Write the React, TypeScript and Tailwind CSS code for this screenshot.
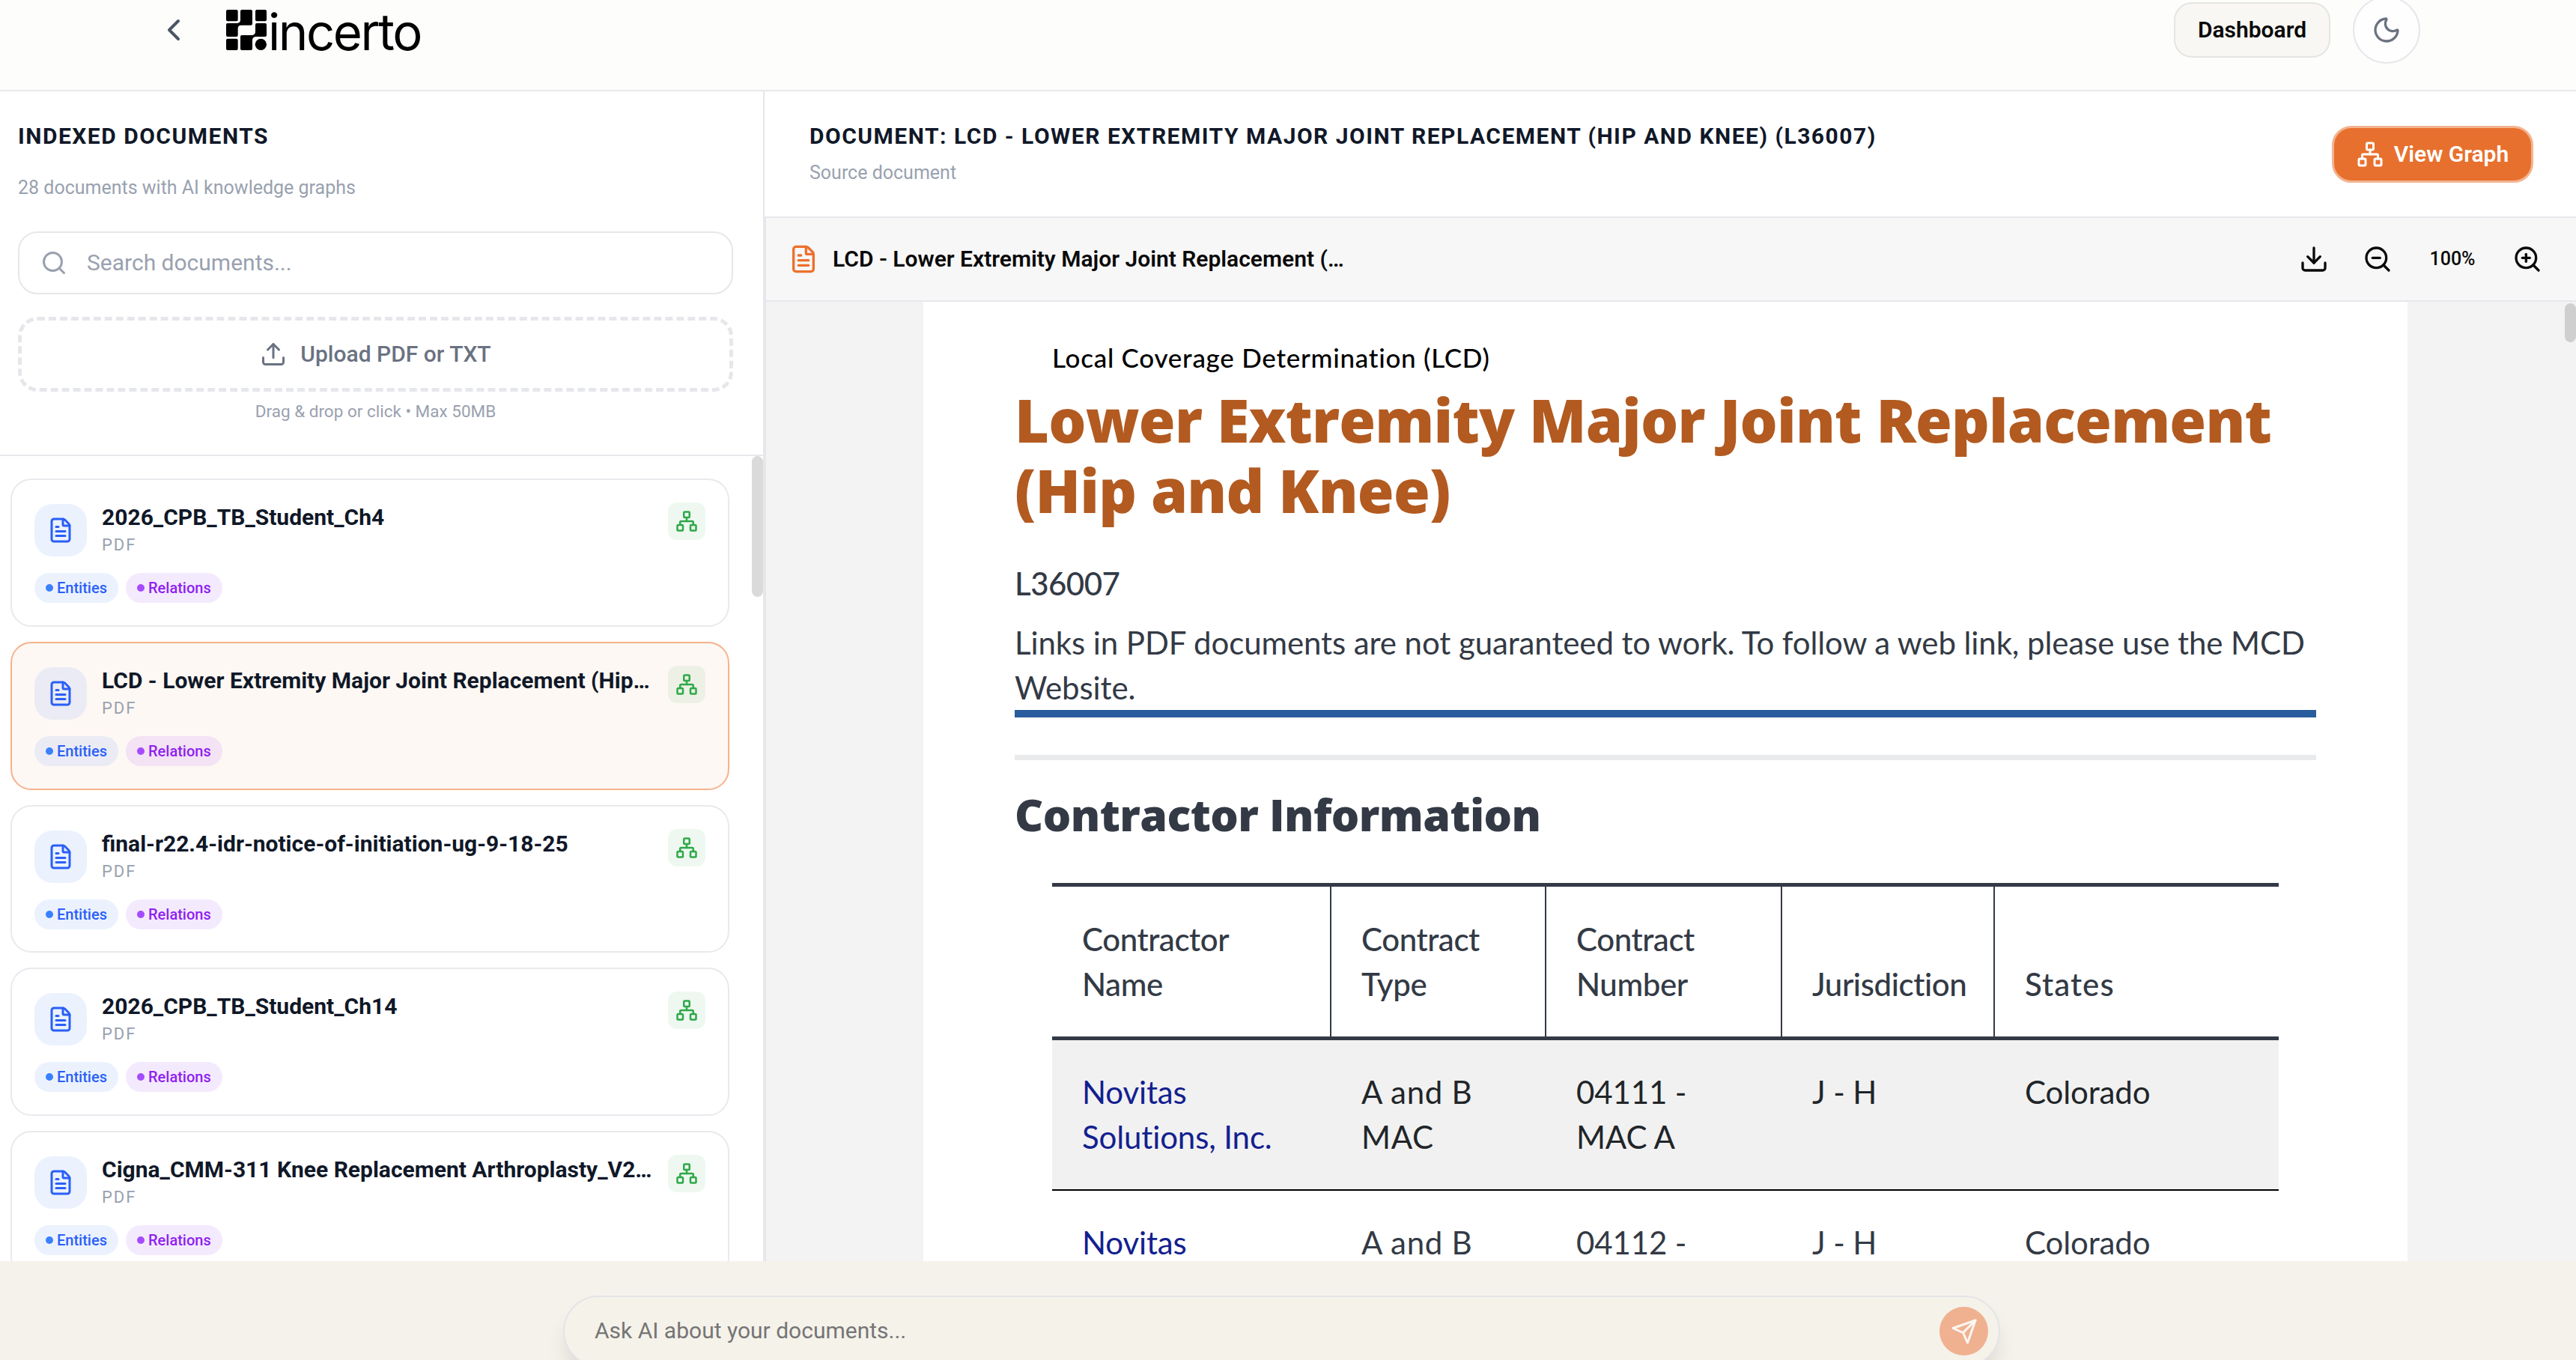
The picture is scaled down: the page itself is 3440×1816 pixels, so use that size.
import { ChevronLeft, Download, FileText, Moon, Network, Search, Upload, ZoomIn, ZoomOut } from "lucide-react";
import { clsx } from "clsx";

interface Doc {
  id: number;
  title: string;
  type: string;
  selected?: boolean;
}

const documents: Doc[] = [
  { id: 1, title: "2026_CPB_TB_Student_Ch4", type: "PDF" },
  { id: 2, title: "LCD - Lower Extremity Major Joint Replacement (Hip…", type: "PDF", selected: true },
  { id: 3, title: "final-r22.4-idr-notice-of-initiation-ug-9-18-25", type: "PDF" },
  { id: 4, title: "2026_CPB_TB_Student_Ch14", type: "PDF" },
  { id: 5, title: "Cigna_CMM-311 Knee Replacement Arthroplasty_V2…", type: "PDF" },
];

const tableHead = [
  ["Contractor", "Name"],
  ["Contract", "Type"],
  ["Contract", "Number"],
  ["Jurisdiction"],
  ["States"],
];

const tableRows = [
  [["Novitas", "Solutions, Inc."], ["A and B", "MAC"], ["04111 -", "MAC A"], ["J - H"], ["Colorado"]],
  [["Novitas"], ["A and B"], ["04112 -"], ["J - H"], ["Colorado"]],
];

function Logo() {
  return (
    <div className="flex items-center">
      <svg className="h-[54px] w-[54px]" viewBox="0 0 162 162" fill="#000">
        <rect width="47" height="46" rx="6" />
        <rect x="117" width="45" height="46" rx="6" />
        <rect y="116" width="47" height="46" rx="6" />
        <circle cx="139" cy="139" r="23" />
        <path d="M63 0H99q6 0 6 6V56q0 6-6 6H60q-12 0-13 12V102q0 6-6 6H6q-6 0-6-6V60q0-6 6-6H42q14 0 15-12V6q0-6 6-6z" />
        <path d="M123 54H156q6 0 6 6V102q0 6-6 6H120q-13 0-15 12V156q0 6-6 6H63q-6 0-6-6V108q0-6 6-6H102q13 0 15-12V60q0-6 6-6z" />
      </svg>
      <span className="ml-[2px] h-[54px] font-['Inter',sans-serif] text-[67px] leading-[60px] font-normal tracking-[-0.036em] text-black">
        incerto
      </span>
    </div>
  );
}

function Header() {
  return (
    <header className="flex h-[122px] shrink-0 items-start justify-between border-b-2 border-[#e8e8ec] bg-[#fdfdfc] pr-[208px] pl-[208px]">
      <div className="flex h-[80px] items-center gap-[46px]">
        <ChevronLeft className="h-12 w-12 text-[#4b5565]" />
        <Logo />
      </div>
      <div className="flex h-[80px] items-center gap-[30px]">
        <button className="h-[74px] w-[209px] rounded-[24px] border-2 border-[#e5e5e3] bg-[#f8f7f3] pb-[2px] text-[30px] font-semibold text-[#0a0a0a]">
          Dashboard
        </button>
        <button className="flex h-[90px] w-[90px] items-center justify-center rounded-full border-2 border-[#e5e7eb] bg-[#fefefe]">
          <Moon className="h-10 w-10 text-[#6b7280]" />
        </button>
      </div>
    </header>
  );
}

function DocumentCard({ doc }: { doc: Doc }) {
  return (
    <div
      className={clsx(
        "h-[197.75px] shrink-0 rounded-[28px] border-2 px-[30px] pt-[30px]",
        doc.selected ? "border-[#f6b28c] bg-[#fef8f4]" : "border-[#e9e9ee] bg-white"
      )}
    >
      <div className="flex items-start">
        <div className="mt-[2px] flex h-[70px] w-[70px] shrink-0 items-center justify-center rounded-[24px] bg-[#3b82f6]/10">
          <FileText className="h-9 w-9 text-[#2a5ff7]" />
        </div>
        <div className="ml-5 min-w-0 flex-1 whitespace-nowrap">
          <h3 className="text-[30px] leading-[40px] font-bold text-[#101828]">{doc.title}</h3>
          <p className="mt-px text-[22px] leading-[32px] tracking-[0.09em] text-[#99a1af]">{doc.type}</p>
        </div>
        <div className="flex h-[50px] w-[50px] shrink-0 items-center justify-center rounded-[12px] bg-[#28aa46]/[0.08]">
          <Network className="h-[30px] w-[30px] text-[#2fa84a]" />
        </div>
      </div>
      <div className="mt-[21px] flex gap-[10px] text-[20px] font-medium">
        <span className="flex h-10 w-[112px] items-center gap-[5px] rounded-full bg-[#3b82f6]/10 pl-[15px] text-[#2a5ff7]">
          <span className="h-[10px] w-[10px] rounded-full bg-[#3b80ff]" />
          Entities
        </span>
        <span className="flex h-10 w-[129px] items-center gap-[5px] rounded-full bg-[#a855f7]/[0.12] pl-[15px] text-[#8f1ff0]">
          <span className="h-[10px] w-[10px] rounded-full bg-[#a54bff]" />
          Relations
        </span>
      </div>
    </div>
  );
}

function Sidebar() {
  return (
    <aside className="relative flex w-[1021px] shrink-0 flex-col overflow-hidden border-r-2 border-[#e5e7eb] bg-white">
      <div className="flex h-[487px] shrink-0 flex-col border-b-2 border-[#e8e8ec] px-6 pt-[40px]">
        <h2 className="text-[30px] leading-[40px] font-bold tracking-[0.05em] text-[#101828]">INDEXED DOCUMENTS</h2>
        <p className="mt-[33px] text-[25px] leading-[32px] text-[#99a1af]">28 documents with AI knowledge graphs</p>
        <div className="mt-[42px] flex h-[84px] w-[955px] items-center rounded-[26px] border-2 border-[#e5e7eb] pl-[28px]">
          <Search className="h-9 w-9 text-[#99a1af]" />
          <span className="mb-[2px] ml-[26px] text-[30px] text-[#99a1af]">Search documents...</span>
        </div>
        <button className="mt-[30px] flex h-[100px] w-[955px] items-center justify-center gap-[18px] rounded-[26px] border-[5px] border-dashed border-[#e5e7eb] text-[30px] font-medium text-[#6a7282]">
          <Upload className="h-9 w-9" />
          <span className="mb-[2px]">Upload PDF or TXT</span>
        </button>
        <p className="mt-[10px] w-[955px] text-center text-[22.5px] leading-[32px] text-[#99a1af]">
          Drag &amp; drop or click • Max 50MB
        </p>
      </div>
      <div className="flex min-h-0 flex-1 flex-col gap-5 overflow-hidden pt-[30px] pr-[45px] pl-[14px]">
        {documents.map((doc) => (
          <DocumentCard key={doc.id} doc={doc} />
        ))}
      </div>
      {/* Scroll thumb */}
      <div className="absolute top-[487px] right-0 h-[188px] w-[15px] rounded-full bg-[#dadada]" />
    </aside>
  );
}

function TableCell({ lines, last, className }: { lines: string[]; last: boolean; className: string }) {
  return (
    <div className={clsx("flex flex-col pl-[40px]", !last && "border-r-2", className)}>
      {lines.map((line) => (
        <span key={line}>{line}</span>
      ))}
    </div>
  );
}

function ContractorTable() {
  return (
    <div className="mt-[57px] ml-[50px] w-[1638px] border-t-[5px] border-[#333a45]">
      <div className="grid grid-cols-[373px_287px_315px_284px_379px] border-b-[5px] border-[#333a45] font-medium tracking-[-0.01em]">
        {tableHead.map((lines, i) => (
          <TableCell
            key={i}
            lines={lines}
            last={i === 4}
            className={clsx("justify-end border-[#333a45] pt-[40px] pb-[40px]", i === 4 && "tracking-[0.025em]")}
          />
        ))}
      </div>
      {tableRows.map((row, r) => (
        <div
          key={r}
          className={clsx(
            "grid grid-cols-[373px_287px_315px_284px_379px] border-b-2 border-black tracking-[-0.003em]",
            r % 2 === 0 && "bg-[#f1f1f1] text-[#212529]"
          )}
        >
          {row.map((lines, i) => (
            <TableCell
              key={i}
              lines={lines}
              last={i === 4}
              className={clsx(
                "border-transparent pt-[39px] pb-[40px]",
                i === 0 && "text-[#13208f]",
                i === 1 && "tracking-[0.016em]"
              )}
            />
          ))}
        </div>
      ))}
    </div>
  );
}

function DocumentPage() {
  return (
    <div className="ml-[210px] w-[1982px] bg-white pt-[49px] pl-[122px] font-['Lato',sans-serif] text-[42px] leading-[60px] whitespace-nowrap text-[#333a45]">
      <p className="ml-[50px] text-[35px] leading-[50px] font-medium tracking-[0.021em] text-black">
        Local Coverage Determination (LCD)
      </p>
      <h1 className="mt-[12px] font-['Open_Sans',sans-serif] text-[79px] leading-[94px] font-extrabold tracking-[-0.01em] text-[#b25a20]">
        Lower Extremity Major Joint Replacement
        <br />
        (Hip and Knee)
      </h1>
      <p className="mt-[47px] font-medium tracking-[-0.012em]">L36007</p>
      <p className="mt-[19px] tracking-[-0.0023em]">
        Links in PDF documents are not guaranteed to work. To follow a web link, please use the MCD
        <br />
        Website.
      </p>
      <div className="h-[10px] w-[1738px] bg-[#285c9c]" />
      <div className="mt-[50px] h-[7px] w-[1738px] bg-[#e9eaec]" />
      <h2 className="mt-[37px] font-['Open_Sans',sans-serif] text-[59px] leading-[70px] font-extrabold tracking-[-0.01em]">
        Contractor Information
      </h2>
      <ContractorTable />
    </div>
  );
}

function Viewer() {
  return (
    <main className="flex min-w-0 flex-1 flex-col bg-white">
      <div className="flex h-[169px] shrink-0 justify-between border-b-2 border-[#e8e8ec] pr-[57px] pl-[60px]">
        <div className="pt-[40px]">
          <h1 className="text-[30px] leading-[40px] font-bold tracking-[0.05em] text-[#101828]">
            DOCUMENT: LCD - LOWER EXTREMITY MAJOR JOINT REPLACEMENT (HIP AND KNEE) (L36007)
          </h1>
          <p className="mt-[13px] text-[25px] leading-[32px] text-[#99a1af]">Source document</p>
        </div>
        <button className="mt-[46px] flex h-[76px] w-[269px] items-center justify-center gap-[14px] rounded-[26px] border-3 border-[#f3b490] bg-[#e8702e] text-[30px] font-semibold text-white">
          <Network className="h-9 w-9" />
          <span className="mb-[2px]">View Graph</span>
        </button>
      </div>
      <div className="flex min-h-0 flex-1 flex-col border-l-2 border-[#e5e7eb]">
        <div className="flex h-[112px] shrink-0 items-center justify-between border-b-2 border-[#e5e7eb] bg-[#f7f7f7] pr-[45px] pl-[30px] text-[#0a0a0a]">
          <div className="flex items-center gap-[19px]">
            <FileText className="h-10 w-10 text-[#ed702d]" />
            <span className="mb-[2px] text-[30px] font-semibold">LCD - Lower Extremity Major Joint Replacement (…</span>
          </div>
          <div className="flex items-center">
            <Download className="h-10 w-10" />
            <ZoomOut className="ml-[45px] h-10 w-10" />
            <span className="w-[160px] text-center text-[25px] font-medium">100%</span>
            <ZoomIn className="h-10 w-10" />
          </div>
        </div>
        <div className="relative min-h-0 flex-1 overflow-hidden bg-[#f3f3f3]">
          <DocumentPage />
          {/* Scroll thumb */}
          <div className="absolute top-[2px] right-0 h-[52px] w-[15px] rounded-full bg-[#cfcfcf]" />
        </div>
      </div>
    </main>
  );
}

function ChatBar() {
  return (
    <footer className="h-[132px] shrink-0 bg-[#f5f2ec] pt-[46px] pl-[752px]">
      <div className="flex h-[95px] w-[1919px] items-center justify-between rounded-full border-2 border-[#e3e4e6] bg-[#f5f2ea] pr-[14px] pl-[40px] shadow-[0_20px_30px_-6px_rgba(0,0,0,0.12)]">
        <span className="mb-[2px] text-[30px] text-[#757575]">Ask AI about your documents...</span>
        <button className="flex h-[65px] w-[65px] items-center justify-center rounded-full bg-[#f0b190]">
          <svg
            className="h-9 w-9"
            viewBox="0 0 24 24"
            fill="none"
            stroke="#fbf7f3"
            strokeWidth={2}
            strokeLinecap="round"
            strokeLinejoin="round"
          >
            <path d="m22 2-7 20-4-9-9-4Z" />
            <path d="M22 2 11 13" />
          </svg>
        </button>
      </div>
    </footer>
  );
}

export default function App() {
  return (
    <div className="flex h-[1816px] w-[3440px] flex-col overflow-hidden bg-white font-['Roboto',sans-serif]">
      <Header />
      <div className="flex min-h-0 flex-1">
        <Sidebar />
        <Viewer />
      </div>
      <ChatBar />
    </div>
  );
}
